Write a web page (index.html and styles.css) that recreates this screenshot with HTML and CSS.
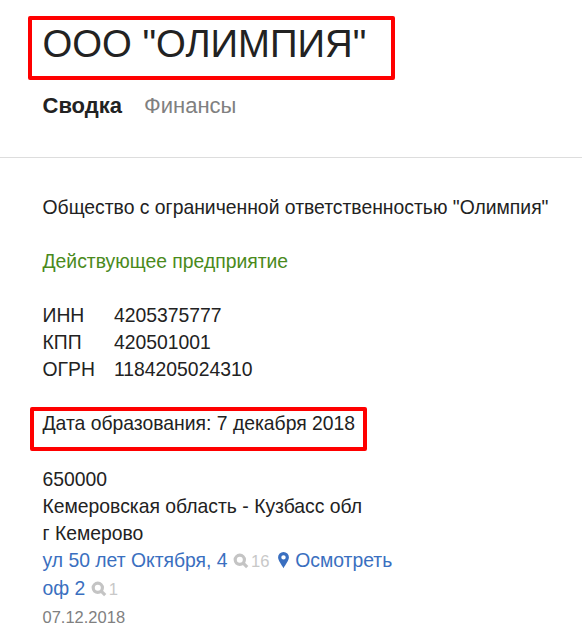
FILE: index.html
```html
<!DOCTYPE html>
<html lang="ru">
<head>
<meta charset="utf-8">
<title>ООО "ОЛИМПИЯ"</title>
<link rel="stylesheet" href="styles.css">
</head>
<body>
<header class="head">
  <h1 class="title">ООО "ОЛИМПИЯ"</h1>
  <nav class="tabs"><a class="tab active">Сводка</a><a class="tab">Финансы</a></nav>
</header>
<main class="content">
  <p class="block">Общество с ограниченной ответственностью "Олимпия"</p>
  <p class="block status">Действующее предприятие</p>
  <dl class="block codes">
    <dt>ИНН</dt><dd>4205375777</dd>
    <dt>КПП</dt><dd>420501001</dd>
    <dt>ОГРН</dt><dd>1184205024310</dd>
  </dl>
  <p class="block">Дата образования: 7 декабря 2018</p>
  <address class="address">
    <div>650000</div>
    <div>Кемеровская область - Кузбасс обл</div>
    <div>г Кемерово</div>
    <div><a class="link">ул 50 лет Октября, 4</a> <span class="count"><svg class="icon" viewBox="0 0 16 16"><circle cx="6.8" cy="6.8" r="4.6"/><path d="M10.2 10.2l4 4"/></svg>16</span> <a class="link"><svg class="pin" viewBox="0 0 12 16"><path fill-rule="evenodd" d="M6 0.5a5 5 0 0 0-5 5c0 3 3.2 6.800 5 10 1.800-3.200 5-7 5-10a5 5 0 0 0-5-5zm0 3a2 2 0 1 1 0 4.100 2 2 0 0 1 0-4.100z"/></svg> Осмотреть</a></div>
    <div><a class="link">оф 2</a> <span class="count"><svg class="icon" viewBox="0 0 16 16"><circle cx="6.8" cy="6.800" r="4.600"/><path d="M10.200 10.200l4 4"/></svg>1</span></div>
    <div class="date">07.12.2018</div>
  </address>
</main>
<div class="mark mark-title"></div>
<div class="mark mark-date"></div>
</body>
</html>
```
FILE: styles.css
```css
* { box-sizing: border-box; }
html, body { margin: 0; padding: 0; height: 627px; overflow: hidden; background: #fff; }
body { font-family: "Liberation Sans", Arial, sans-serif; font-size: 19.35px; line-height: 27px; color: #222; position: relative; }
.head { padding: 0 0 0 42.5px; border-bottom: 1px solid #ddd; height: 158px; }
.title { margin: 0; padding-top: 20px; font-size: 38.3px; line-height: 47px; font-weight: 400; color: #222; }
.tabs { display: flex; gap: 22px; margin-top: 25px; font-size: 22px; line-height: 28px; }
.tab { color: #808080; }
.tab.active { color: #222; font-weight: 700; }
.content { padding: 36px 0 0 42.5px; }
.block { margin: 0 0 27px; }
.status { color: #4a8a1c; }
.codes { display: grid; grid-template-columns: 71.5px auto; justify-content: start; }
.codes dt, .codes dd { margin: 0; }
.address { font-style: normal; margin-top: 29px; }
.link { color: #3a6fc0; }
.count { color: #c8c8c8; font-size: 16.6px; }
.icon { width: 16px; height: 16px; fill: none; stroke: #c4c4c4; stroke-width: 3.2; vertical-align: -2px; margin-right: 2px; }
.pin { width: 13px; height: 18px; fill: #3a6fc0; vertical-align: -2px; margin-left: 2px; }
.date { color: #808080; font-size: 16.5px; margin-top: 1px; }
.mark { position: absolute; border: 4px solid #f00; border-radius: 2px; }
.mark-title { left: 28px; top: 16px; width: 367px; height: 64px; }
.mark-date { left: 30px; top: 407px; width: 337px; height: 44px; }
```
